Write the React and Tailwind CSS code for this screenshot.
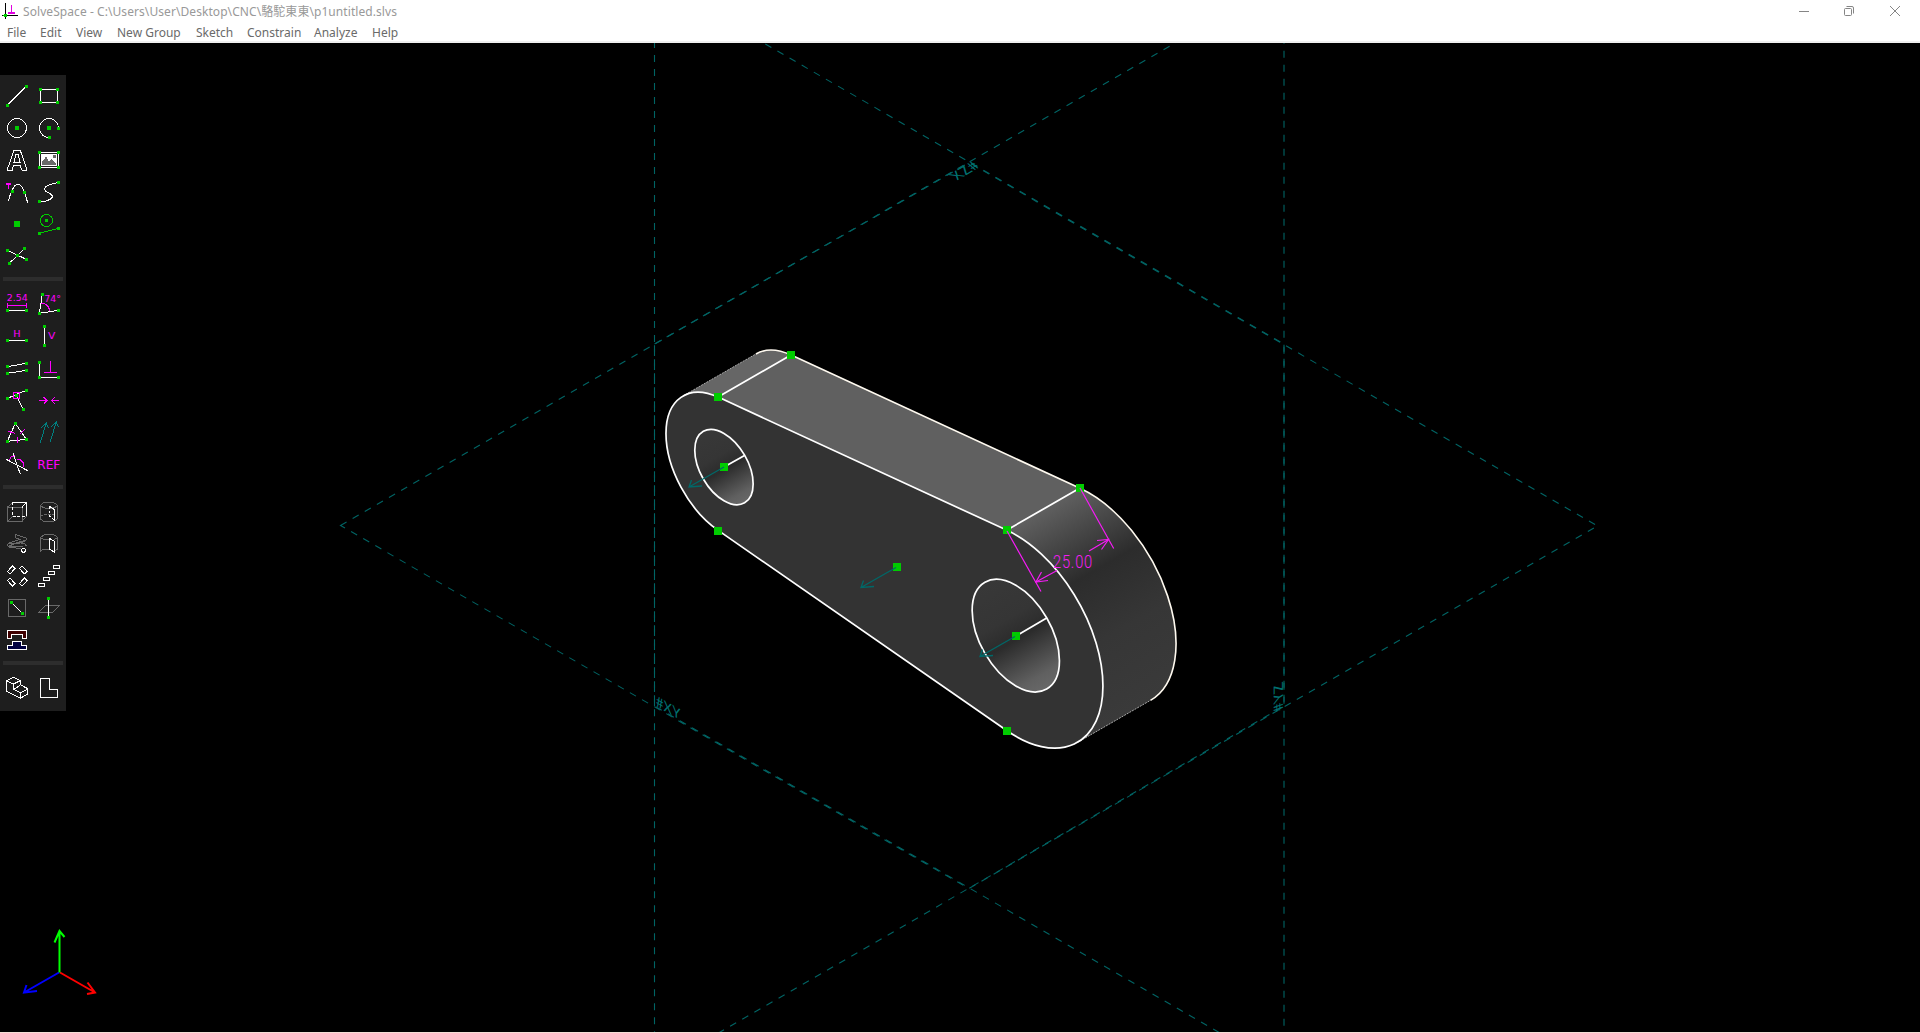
import React from "react";

const MENU = [
  ["File", "w-[33px]"],
  ["Edit", "w-[36px]"],
  ["View", "w-[41px]"],
  ["New Group", "w-[79px]"],
  ["Sketch", "w-[51px]"],
  ["Constrain", "w-[67px]"],
  ["Analyze", "w-[58px]"],
  ["Help", "w-[40px]"],
];

const W = "#ffffff";
const G = "#00cc00";
const M = "#ff00ff";
const D = "#696969";
const T = "#008080";

/* Toolbar drawings use three units per pixel. */
function Icon({ x, y, children }) {
  return (
    <svg
      className="size-8 shrink-0"
      viewBox={`${x} ${y} 96 96`}
      fill="none"
      stroke={W}
      strokeWidth="3"
      shapeRendering="crispEdges"
    >
      {children}
    </svg>
  );
}

function Dots({ at, s = 9 }) {
  return at.map(([x, y]) => (
    <rect key={`${x}-${y}`} x={x - s / 2} y={y - s / 2} width={s} height={s} fill={G} stroke="none" />
  ));
}

function Label({ x, y, size, width, children }) {
  return (
    <text
      x={x}
      y={y}
      fill={M}
      stroke="none"
      fontFamily="DejaVu Sans"
      fontSize={size}
      textLength={width}
      lengthAdjust="spacingAndGlyphs"
    >
      {children}
    </text>
  );
}

function Separator() {
  return (
    <div className="flex h-4 items-start px-[3px] pt-[5px]">
      <div className="h-1 w-full bg-[#2d2d2d]" />
    </div>
  );
}

function SketchTools() {
  return (
    <div className="grid grid-cols-[32px_32px] pl-px">
      <Icon x={3} y={30}>
        <path d="M22 106L79 49" />
        <Dots at={[[22.5, 106.5], [79.5, 49.5]]} />
      </Icon>
      <Icon x={99} y={30}>
        <rect x="121.5" y="58.5" width="51" height="39" />
        <Dots at={[[121.5, 58.5], [172.5, 58.5], [121.5, 97.5], [172.5, 97.5]]} />
      </Icon>
      <Icon x={3} y={126}>
        <circle cx="51" cy="174" r="28.5" />
        <Dots at={[[51, 174]]} s={12} />
      </Icon>
      <Icon x={99} y={126}>
        <path d="M175.500 174A28.500 28.500 0 1 0 148 202.500" />
        <Dots at={[[175.5, 175.5], [148.5, 202.5]]} />
        <Dots at={[[147, 174]]} s={12} />
      </Icon>
      <Icon x={3} y={222}>
        <path d="M22.500 300.500H37.500V294L42 285H60L66 300.500H79.500V294L61 241.500H42L26 288L22.500 294ZM42 276L48 253.500H54L60 276Z" />
      </Icon>
      <Icon x={99} y={222}>
        <rect x="118.500" y="247.500" width="57" height="45" />
        <rect x="124.500" y="253.500" width="45" height="33" fill={W} />
        <path d="M126 285V276L138 260L147 274L154 267L168 279V285Z" fill={D} stroke="none" />
        <rect x="159" y="255" width="9" height="8" fill={D} stroke="none" />
        <Dots at={[[118.5, 247.5], [175.5, 247.5], [118.5, 292.5], [175.5, 292.5]]} />
      </Icon>
      <Icon x={3} y={318}>
        <path d="M25.500 392L31 373L38 357L45 346Q54 340 62 346L68 354L74 368L83 398" />
        <path d="M18 341.500H33M25.500 341.500V357" stroke={M} strokeWidth="4" />
        <Dots at={[[37.5, 364.5], [73.5, 367.5]]} />
      </Icon>
      <Icon x={99} y={318}>
        <path d="M175 337L151 343L137 350L133 357L137 364L150 371L158 379L154 386L139 393L118 394" />
        <Dots at={[[175.5, 337.5], [118.5, 394.5]]} />
      </Icon>
      <Icon x={3} y={414}>
        <Dots at={[[51, 462]]} s={18} />
      </Icon>
      <Icon x={99} y={414}>
        <circle cx="139.500" cy="451.500" r="18" stroke={G} />
        <path d="M118 490L175 475" stroke={G} />
        <Dots at={[[139.5, 451.5], [118.5, 490.5], [175.5, 475.5]]} />
      </Icon>
      <Icon x={3} y={510}>
        <path d="M22 541L79 568M28 580L73 536" />
        <Dots at={[[22.5, 541.5], [79.5, 568.5], [28.5, 580.5], [73.5, 535.5], [52.5, 556.5]]} />
      </Icon>
    </div>
  );
}

function ConstraintTools() {
  return (
    <div className="grid grid-cols-[32px_32px] pl-px">
      <Icon x={3} y={54}>
        <Label x={20} y={94} size={28} width={63}>2.54</Label>
        <path d="M22.500 99V114M79.500 99V114M22 106.500H80" stroke={M} />
        <path d="M22 121.500H80" />
        <Dots at={[[22.5, 121.5], [79.5, 121.5]]} />
      </Icon>
      <Icon x={99} y={54}>
        <path d="M127 73L118 130L175 121" />
        <path d="M124 100L136 102L145 110L150 124" stroke={M} />
        <Label x={133} y={96} size={28} width={50}>74°</Label>
        <Dots at={[[127.5, 73.5], [118.5, 130.5], [175.5, 121.5]]} />
      </Icon>
      <Icon x={3} y={150}>
        <Label x={40} y={202} size={28} width={22}>H</Label>
        <path d="M22 211.500H80" />
        <Dots at={[[22.5, 211.5], [79.5, 211.5]]} />
      </Icon>
      <Icon x={99} y={150}>
        <path d="M133.500 169V226" />
        <Label x={144} y={208} size={28} width={22}>V</Label>
        <Dots at={[[133.5, 169.5], [133.5, 226.5]]} />
      </Icon>
      <Icon x={3} y={246}>
        <path d="M22 290L79 280M22 310L79 301" />
        <Dots at={[[22.5, 289.5], [79.5, 280.5], [22.5, 310.5], [79.5, 301.5]]} />
      </Icon>
      <Icon x={99} y={246}>
        <path d="M118.500 277V322.500H176" />
        <path d="M151.500 274V307M133 307.500H170" stroke={M} />
        <Dots at={[[118.5, 277.5], [118.5, 322.5], [175.5, 322.5]]} />
      </Icon>
      <Icon x={3} y={342}>
        <path d="M22 385L79 361M49 376L70 418" />
        <rect x="40.500" y="367.500" width="18" height="18" stroke={M} />
        <Dots at={[[22.5, 385.5], [79.5, 361.5], [49.5, 376.5], [70.5, 418.5]]} />
      </Icon>
      <Icon x={99} y={342}>
        <path d="M117 391.500H141M131 382L141 391.500L131 401M177 391.500H153M164 382L154 391.500L164 401" stroke={M} />
      </Icon>
      <Icon x={3} y={438}>
        <path d="M46 460L22 514L79 508Z" />
        <path d="M25 484L44 490M61 490L74 479M51 500V518" stroke={M} />
        <Dots at={[[46.5, 460.5], [22.5, 514.5], [79.5, 508.5]]} />
      </Icon>
      <Icon x={99} y={438}>
        <path d="M121 518L139 458M123 474L139 458L145 475M151 515L169 455M153 471L169 455L175 472" stroke={T} />
      </Icon>
      <Icon x={3} y={534}>
        <path d="M19 568L83 602M39 550L61 613" />
        <path d="M29 570L33 561L44 557M50 569L60 568L69 577L70 591" stroke={M} />
      </Icon>
      <Icon x={99} y={534}>
        <Label x={112} y={598} size={36} width={69}>REF</Label>
      </Icon>
    </div>
  );
}

function GroupTools() {
  return (
    <div className="grid grid-cols-[32px_32px] pl-px">
      <Icon x={3} y={48}>
        <path d="M22.500 82.500H66V124.500H22.500ZM22 82L38 67M66 124L80 109M23 124L38 109" stroke={D} />
        <path d="M37.500 67.500H79.500V109M66 82L80 67" />
        <path d="M37.500 67V109H79" strokeDasharray="9 5" />
      </Icon>
      <Icon x={99} y={48}>
        <path d="M121.500 76L130 69L140 67H155L166 70L172.500 76L166 82L153 85H140L128 82ZM121.500 76V117L130 123L140 125H155L166 122L172.500 116V76" stroke={D} />
        <path d="M122 109L132 104H163" stroke={D} strokeDasharray="7 5" />
        <path d="M148.500 79V108L163.500 122" strokeDasharray="8 5" />
        <path d="M148 79L163.500 89V122" />
      </Icon>
      <Icon x={3} y={144}>
        <path d="M46 163L79 174V180L52 188L73 190L79 198M46 163V173L60 178L27 189L22 195L27 201L62 206M27 190H58L75 184M52 188L25 199L68 199" stroke={D} />
        <circle cx="70.500" cy="211" r="6" fill="#1e1e1e" />
      </Icon>
      <Icon x={99} y={144}>
        <path d="M121.500 172L130 166L140 163H155L166 166L172.500 172V208L160 214M121.500 172V213L128 209H148M122 173L130 178L148 180M172 173L162 178" stroke={D} />
        <path d="M148.500 175L163.500 184V217L148.500 207Z" />
      </Icon>
      <Icon x={3} y={240}>
        <path d="M22 275L37 258L45 265L30 282ZM58 265L66 258L82 275L73 282ZM22 301L30 294L45 311L37 318ZM58 311L73 294L82 301L66 318Z" />
      </Icon>
      <Icon x={99} y={240}>
        <path d="M160.500 256.500H178.500V265.500H160.500ZM145.500 274.500H163.500V283.500H145.500ZM130.500 292.500H148.500V301.500H130.500ZM115.500 310.500H133.500V319.500H115.500Z" />
      </Icon>
      <Icon x={3} y={336}>
        <rect x="25.500" y="358.500" width="51" height="51" stroke={D} />
        <path d="M34 367L67 400" />
        <Dots at={[[34.5, 367.5], [67.5, 400.5]]} />
      </Icon>
      <Icon x={99} y={336}>
        <path d="M136 376.500H178L157 397.500H115Z" stroke={D} />
        <path d="M145.500 355V412" />
        <Dots at={[[145.5, 355.5], [145.5, 412.5]]} />
      </Icon>
      <Icon x={3} y={432}>
        <path d="M22.500 451.500H79.500V475H67.500V463.500H34.500V475H22.500Z" fill="#400000" />
        <path d="M37.500 484.500H64.500V496.500H79.500V508.500H22.500V496.500H37.500Z" fill="#000040" />
      </Icon>
    </div>
  );
}

function ViewTools() {
  return (
    <div className="grid grid-cols-[32px_32px] pl-px">
      <Icon x={3} y={576}>
        <path d="M19 603L40 592L61 602L40 612ZM19 603V634L61 655L83 642V626L61 614V602M40 612V628L61 638L83 627M40 628L61 616M61 638V655M40 612V625" />
      </Icon>
      <Icon x={99} y={576}>
        <path d="M121.500 595.500H148.500V628.500H172.500V652.500H121.500Z" />
      </Icon>
    </div>
  );
}

/* Isometric plane of the part's front face; depth runs along (84.3,-84.2). */
const FACE =
  "M-343.700 -66.660L-10.100 -100.200A100.700 100.700 0 1 1 -10.100 100.200L-343.700 66.660A67 67 0 0 1 -343.700 -66.660Z";

const NODES = [
  [791, 355], [718, 397], [724, 467], [718, 531], [1080, 488],
  [1007, 530], [897, 567], [1016, 636], [1007, 731],
];

function Arrow({ x, y }) {
  return <path d={`M${x} ${y}l-35 20m2.500 -7l-2.500 7l13 -1`} />;
}

function Model() {
  return (
    <svg className="block h-full w-full" viewBox="0 43 1920 989" fill="none">
      <defs>
        <linearGradient id="bend" gradientUnits="userSpaceOnUse" x1="-55.5" y1="-55.5" x2="71.6" y2="71.6">
          <stop offset="0" stopColor="#606060" />
          <stop offset="0.36" stopColor="#2c2c2c" />
          <stop offset="0.65" stopColor="#363636" />
          <stop offset="1" stopColor="#3a3a3a" />
        </linearGradient>
        <linearGradient id="bore" x1="0.147" y1="0.147" x2="0.853" y2="0.853">
          <stop offset="0" stopColor="#383838" />
          <stop offset="0.35" stopColor="#353535" />
          <stop offset="0.53" stopColor="#2b2b2b" />
          <stop offset="0.88" stopColor="#606060" />
          <stop offset="1" stopColor="#686868" />
        </linearGradient>
      </defs>

      <g stroke="#006464" strokeWidth="1.1" strokeDasharray="7 7">
        <path d="M654.500 706V-20L1284 344V1070Z" />
        <path d="M340.500 525.500L969 162.500L1597.500 526L969 888.500Z" />
        <path d="M654.500 344L1284 -20V706L654.500 1070Z" />
      </g>
      <g fill="#007070" fontFamily="Lato" fontSize="15">
        <text transform="matrix(.866 .5 0 1 656 706)" textLength="28">#XY</text>
        <text transform="matrix(0 -1 .866 -.5 1283 709)" textLength="28">#YZ</text>
        <text transform="matrix(-.866 .5 -.866 -.5 972 161)" textLength="28">#ZX</text>
      </g>

      <g transform="matrix(.866 .5 0 1 1015.800 635.600)" strokeWidth="2">
        <path fill="#666666" d="M-384.400 -47.400L-300.100 -131.600A67 67 0 0 1 -259.400 -150.860L-343.700 -66.660Z" />
        <path fill="#606060" d="M-343.700 -66.660L-259.400 -150.860L74.200 -184.400L-10.100 -100.200Z" />
        <path fill="url(#bend)" d="M-10.100 -100.200L74.200 -184.400A100.700 100.700 0 0 1 155.500 -13L71.200 71.200Z" />
        <path
          stroke="#fffaf0"
          strokeWidth="1.600"
          vectorEffect="non-scaling-stroke"
          d="M-300.100 -131.600A67 67 0 0 1 -259.400 -150.860L74.200 -184.400A100.700 100.700 0 0 1 155.500 -13"
        />
        <path
          stroke="#aaaaaa"
          strokeWidth="1"
          strokeDasharray="2 1"
          vectorEffect="non-scaling-stroke"
          d="M-384.400 -47.400L-300.100 -131.600M71.200 71.200L155.500 -13"
        />
        <g stroke={W}>
          <path vectorEffect="non-scaling-stroke" fill="#333333" strokeWidth="1.700" d={FACE} />
          <circle vectorEffect="non-scaling-stroke" strokeWidth="1.700" r="50.400" fill="url(#bore)" />
          <circle vectorEffect="non-scaling-stroke" strokeWidth="1.700" cx="-337" r="33.700" fill="url(#bore)" />
        </g>
      </g>
      <g stroke={W} strokeWidth="1.800">
        <path d="M718 397L791 355M1007 530L1080 488M724 467L744.500 455.500M1016 636L1046.700 618" />
      </g>

      <g fill={G}>
        {NODES.map(([x, y]) => (
          <rect key={`${x}-${y}`} x={x - 4} y={y - 4} width="8" height="8" shapeRendering="crispEdges" />
        ))}
      </g>
      <g stroke="#006868" strokeWidth="1.300">
        <Arrow x={724} y={467} />
        <Arrow x={896} y={567.5} />
        <Arrow x={1015} y={636.5} />
      </g>

      <g stroke="#f41cf4" strokeWidth="1.200">
        <path d="M1007 531L1041 591.500M1080 488L1113.700 548.500M1036 582L1057 570.500M1089 551L1108.500 539.500" />
        <path d="M1041.500 572L1036 582L1048 580.500M1097 540.500L1108.500 539.500L1101.500 549.500" />
      </g>
      <text x="1053" y="567.500" fill="#f41cf4" fontFamily="Roboto" fontWeight="300" fontSize="19" textLength="40" letterSpacing="1" lengthAdjust="spacingAndGlyphs">
        25.00
      </text>

      <g strokeWidth="2">
        <path stroke="#ff0000" d="M60 972.500L95 992.500M87.500 982.500L95 992.500L87 994" />
        <path stroke="#0000ff" d="M59 972.500L24 992.500M26.500 985L24 992.500L37 991" />
        <path stroke="#00ff00" d="M59.500 972.500V931M54.500 942.500L59.500 931L64.500 937" />
      </g>
    </svg>
  );
}

function WindowButtons() {
  return (
    <svg className="h-5 w-[140px] shrink-0" viewBox="1780 0 140 20" fill="none" stroke="#858585" strokeWidth="1">
      <path d="M1799 10.500H1809" />
      <rect x="1844.500" y="7.500" width="7" height="7" rx="1" />
      <path d="M1846.500 5.500H1852Q1853.500 5.500 1853.500 7V12.500" />
      <path d="M1890 5L1900 15M1900 5L1890 15" />
    </svg>
  );
}

export default function App() {
  return (
    <div className="flex h-[1033px] w-[1920px] flex-col overflow-hidden bg-white font-['Noto_Sans','Noto_Sans_CJK_TC',sans-serif]">
      <header className="flex h-[43px] shrink-0 flex-col border-b-2 border-[#f0f0f0]">
        <div className="flex h-[22px] items-center justify-between">
          <div className="flex items-center">
            <svg className="mr-[3px] h-[22px] w-5" viewBox="0 0 20 22" fill="none" shapeRendering="crispEdges">
              <path d="M5.500 3V19M2 15.500H18" stroke="#000000" />
              <path d="M11.500 5V13M8 13H15" stroke="#e000e0" strokeWidth="1.500" />
              <circle cx="5.500" cy="15.500" r="2" fill={G} />
            </svg>
            <span className="pt-[2px] text-[12px] leading-5 tracking-[0.070px] whitespace-nowrap text-[#999999]">
              {"SolveSpace - C:\\Users\\User\\Desktop\\CNC\\駱駝東東\\p1untitled.slvs"}
            </span>
          </div>
          <WindowButtons />
        </div>
        <nav className="flex h-[19px] items-end pl-[7px] text-[12px] leading-[17px] text-[#6a6a6a]">
          {MENU.map(([label, width]) => (
            <span key={label} className={`${width} shrink-0 whitespace-nowrap`}>
              {label}
            </span>
          ))}
        </nav>
      </header>
      <main className="relative min-h-0 flex-1 bg-black">
        <Model />
        <aside className="absolute top-8 left-0 flex w-[66px] flex-col bg-[#1e1e1e] pt-[5px] pb-[7px]">
          <SketchTools />
          <Separator />
          <ConstraintTools />
          <Separator />
          <GroupTools />
          <Separator />
          <ViewTools />
        </aside>
      </main>
      <div className="h-px shrink-0 bg-[#f5ddd5]" />
    </div>
  );
}
